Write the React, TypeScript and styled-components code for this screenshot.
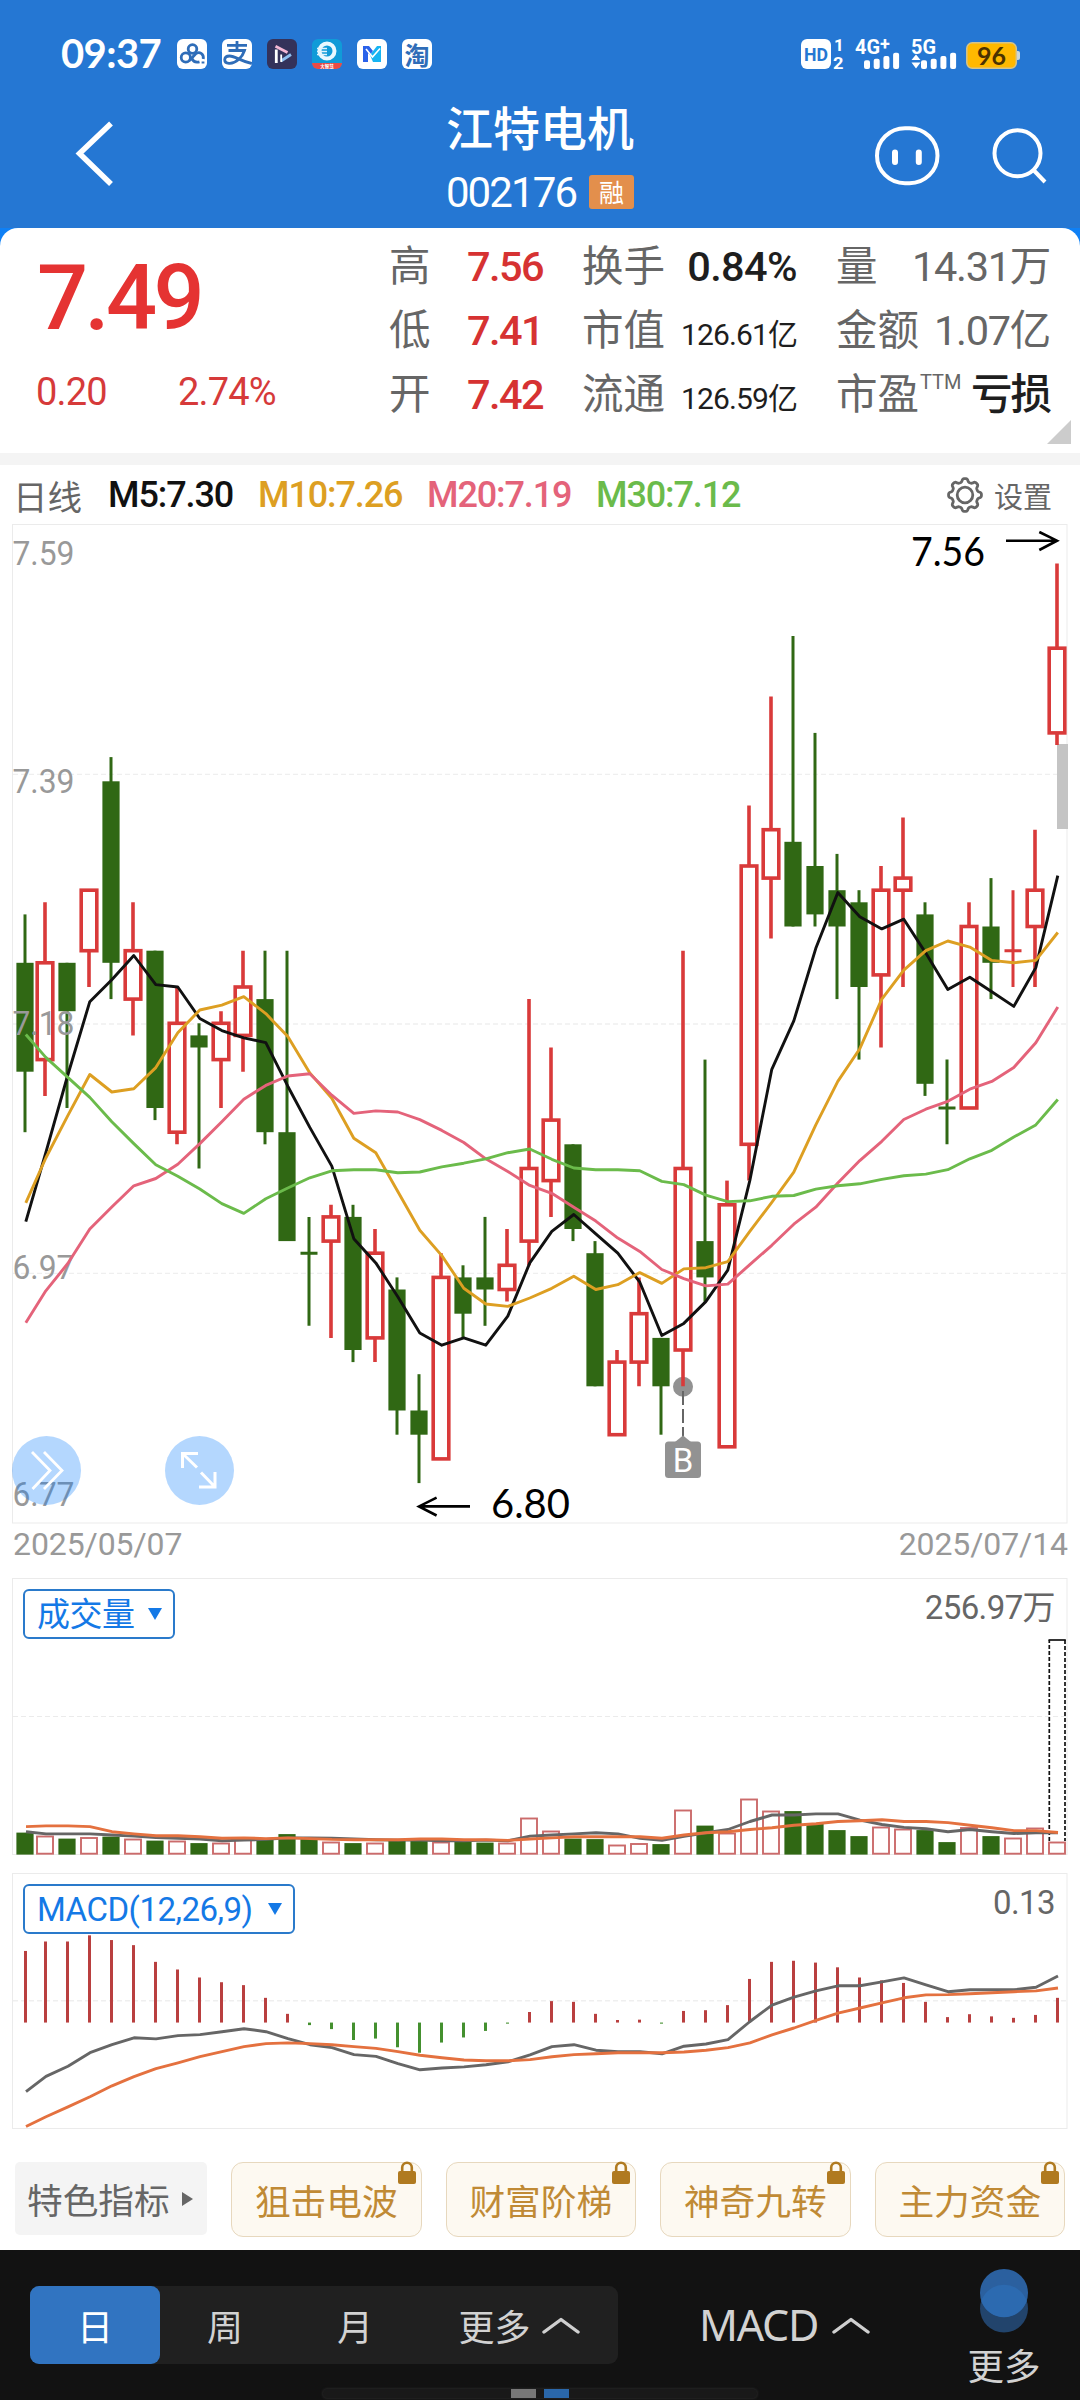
import React from "react";
import styled, { createGlobalStyle } from "styled-components";

const DIN = `Roboto, "Noto Sans CJK SC", sans-serif`;
const HUM = `Lato, "Noto Sans CJK SC", sans-serif`;

const C = {
  blue: "#2577d3",
  up: "#d93a3a",
  upSoft: "#cb6b6b",
  down: "#306814",
  grey: "#666",
  soft: "#999",
  frame: "#ebebeb",
  ma5: "#111",
  ma10: "#dd9f22",
  ma20: "#e4637a",
  ma30: "#6bbb4b",
  link: "#1479e6",
  gold: "#c08a35",
};

const GlobalStyle = createGlobalStyle`
  *, *::before, *::after { box-sizing: border-box; }
  html, body { margin: 0; padding: 0; background: #fff; }
  button { font: inherit; margin: 0; padding: 0; border: 0; background: none; color: inherit; }
`;

/* ---------- market data ---------- */

// open, close, high, low in cents
const candles: [number, number, number, number][] = [
  [723, 714, 727, 709], [715, 723, 728, 712], [723, 719, 723, 711], [724, 729, 729, 721],
  [738, 723, 740, 720], [720, 724, 728, 717], [724, 711, 724, 710], [709, 718, 721, 708],
  [717, 716, 718, 706], [715, 718, 719, 711], [717, 721, 724, 714], [720, 709, 724, 708],
  [709, 700, 724, 700], [699, 699, 702, 693], [700, 702, 703, 692], [702, 691, 703, 690],
  [692, 699, 701, 690], [696, 686, 697, 684], [686, 684, 689, 680], [682, 697, 699, 682],
  [697, 694, 698, 692], [697, 696, 702, 693], [696, 698, 701, 695], [700, 706, 720, 698],
  [705, 710, 716, 702], [708, 701, 708, 700], [699, 688, 700, 688], [684, 690, 691, 684],
  [690, 694, 697, 688], [692, 688, 692, 684], [691, 706, 724, 688], [700, 697, 715, 695],
  [683, 703, 705, 683], [708, 731, 736, 705], [730, 734, 745, 725], [733, 726, 750, 726],
  [731, 727, 742, 726], [729, 726, 732, 720], [728, 721, 729, 715], [722, 729, 731, 716],
  [729, 730, 735, 721], [727, 713, 728, 712], [711, 711, 715, 708], [711, 726, 728, 711],
  [726, 723, 730, 720], [724, 724, 729, 721], [726, 729, 734, 721], [742, 749, 756, 741],
];
const fallingDoji = new Set([13, 42]);
const isUp = (i: number) =>
  candles[i][1] === candles[i][0] ? !fallingDoji.has(i) : candles[i][1] > candles[i][0];

const xAt = (i: number) => (i === 0 ? 25 : 67 + 22 * (i - 2));
const yAt = (cents: number) => 563.5 + (756 - cents) * 12.1;

// Positions for the days whose averages reach back before the first candle
const lead5 = [1221.7, 1152.7, 1075, 1001.7];
const lead10 = [1202.8, 1158, 1115.6, 1074.5, 1092, 1088.7, 1067.6, 1032.7, 1010];
const lead20 = [
  1322.8, 1290.8, 1263.5, 1229, 1207, 1185.8, 1178.5, 1164.3, 1143.6, 1121.8, 1099.2, 1085.4,
  1076, 1073.8, 1095.2, 1113.4, 1110.9, 1112, 1119.6,
];
const lead30 = [
  1034.5, 1057.4, 1077.4, 1097.4, 1121.8, 1143.6, 1164.7, 1176.3, 1189, 1203.6, 1213.4, 1198.8,
  1188, 1177.8, 1170.8, 1169.8, 1169.8, 1172.7, 1172, 1166.9, 1163.2, 1158.9, 1152.7, 1149,
  1159.3, 1168, 1169.7, 1169.7, 1170.7,
];

const average = (days: number, lead: number[]) =>
  candles
    .map((_, i) => {
      if (i < lead.length) return `${xAt(i) + 0.8},${lead[i]}`;
      let sum = 0;
      for (let k = i - days + 1; k <= i; k++) sum += candles[k][1];
      return `${xAt(i) + 0.8},${yAt(sum / days).toFixed(1)}`;
    })
    .join(" ");

const volumes = [
  22, 19, 16, 17.5, 18, 16, 14, 14, 11.5, 12, 17.5, 15, 20.5, 15.5, 13, 11.5, 12, 14, 14, 13, 14,
  12, 12, 37, 24, 16, 15.5, 10, 11.5, 10.5, 45, 29, 22, 56, 44, 43.5, 31, 24.5, 18.5, 28, 26,
  24.5, 12.5, 27.5, 18.5, 17, 27, 13,
];
const vol5 = [
  720, 726, 726, 726, 729, 732, 736, 738, 740, 745, 743, 741, 737, 737, 738, 740, 742, 743, 743,
  745, 745, 743, 745, 732, 729, 726, 723, 726, 738, 744, 733, 723, 714, 692, 674, 674, 671, 671,
  688, 700, 708, 712, 720, 714, 720, 725, 723, 723,
];
const vol10 = [
  706, 704, 704, 706, 720, 726, 731, 731, 734, 738, 737, 739, 737, 739, 741, 742, 742, 742, 740,
  740, 742, 742, 744, 740, 737, 734, 734, 734, 734, 738, 729, 723, 720, 714, 709, 702, 698, 692,
  690, 687, 692, 692, 695, 702, 709, 717, 717, 722,
];
const macd = [
  1048, 1022, 1022, 1005, 1018, 1032, 1078, 1099, 1121, 1134, 1142, 1177, 1221, 1252, 1263, 1293,
  1289, 1313, 1328, 1300, 1286, 1268, 1248, 1216, 1186, 1188, 1221, 1238, 1237, 1248, 1213, 1211,
  1197, 1125, 1078, 1075, 1080, 1093, 1121, 1129, 1136, 1188, 1230, 1222, 1228, 1232, 1224, 1177,
];
const dif = [
  1435, 1393, 1365, 1328, 1306, 1287, 1290, 1281, 1278, 1270, 1262, 1270, 1289, 1306, 1314, 1333,
  1338, 1358, 1375, 1370, 1367, 1361, 1353, 1334, 1311, 1306, 1321, 1325, 1325, 1331, 1310, 1304,
  1292, 1242, 1197, 1175, 1158, 1144, 1144, 1133, 1122, 1141, 1160, 1155, 1155, 1155, 1148, 1117,
];
const dea = [
  1531, 1504, 1477, 1449, 1419, 1394, 1372, 1356, 1339, 1325, 1311, 1303, 1301, 1303, 1306, 1311,
  1316, 1325, 1335, 1342, 1348, 1350, 1350, 1347, 1339, 1333, 1331, 1328, 1328, 1328, 1326, 1321,
  1314, 1301, 1279, 1260, 1239, 1219, 1205, 1191, 1177, 1169, 1168, 1166, 1163, 1160, 1158, 1150,
];
const scaled = (v: number) => v / 2.751;
const line = (values: number[]) =>
  values.map((v, i) => `${xAt(i) + 1},${scaled(v).toFixed(1)}`).join(" ");

/* ---------- page and header ---------- */

const Page = styled.main`
  width: 1080px;
  height: 2400px;
  overflow: hidden;
  display: flex;
  flex-direction: column;
  background: #fff;
  font-family: ${DIN};
`;

const Header = styled.header`
  height: 228px;
  flex: none;
  background: ${C.blue};
  color: #fff;
`;

const StatusBar = styled.div`
  height: 108px;
  padding: 39px 60px 39px 60px;
  display: flex;
  align-items: center;
`;

const Clock = styled.span`
  width: 117px;
  padding: 0 0 2px 1px;
  font: 700 40px/28px ${HUM};
  letter-spacing: -0.6px;
`;

const AppIcons = styled.div`
  display: flex;
  gap: 15px;
  margin-right: auto;
`;

const AppIcon = styled.span<{ $bg?: string }>`
  width: 30px;
  height: 30px;
  border-radius: 6px;
  display: flex;
  align-items: center;
  justify-content: center;
  background: ${(p) => p.$bg || "#fff"};
  color: #2f6db8;
  font: 700 25px/30px "Noto Sans CJK SC", sans-serif;
  svg { display: block; border-radius: 6px; }
`;

const SignalIcons = styled.svg`
  display: block;
  width: 219px;
  height: 30px;
  overflow: visible;
`;

const NavBar = styled.div`
  height: 120px;
  display: grid;
  grid-template-columns: 360px 1fr 360px;
`;

const NavSide = styled.div<{ $end?: boolean }>`
  display: flex;
  justify-content: ${(p) => (p.$end ? "flex-end" : "flex-start")};
  svg { display: block; }
`;

const TitleBlock = styled.div`
  display: flex;
  flex-direction: column;
  align-items: center;
`;

const StockName = styled.h1`
  margin: 0;
  height: 48px;
  font: 500 47px/36px "Noto Sans CJK SC", sans-serif;
  white-space: nowrap;
`;

const CodeRow = styled.div`
  display: flex;
  align-items: center;
  gap: 13px;
  height: 72px;
  padding-left: 0;
`;

const Code = styled.span`
  padding-top: 2px;
  font: 400 42px/42px ${DIN};
  letter-spacing: -1.9px;
`;

const MarginTag = styled.span`
  width: 45px;
  height: 34px;
  border-radius: 3px;
  background: #e38f4c;
  font: 400 25px/33px "Noto Sans CJK SC", sans-serif;
  text-align: center;
`;

/* ---------- quote ---------- */

const QuoteBack = styled.div`
  flex: none;
  height: 225px;
  background: linear-gradient(#0f80f5 30px, #fff 30px);
`;

const Quote = styled.section`
  position: relative;
  height: 225px;
  border-radius: 18px 18px 0 0;
  background: #fff;
  display: flex;
`;

const PriceBlock = styled.div`
  width: 389px;
  padding: 23px 0 0 37px;
  color: #e53332;
`;

const Price = styled.div`
  font: 500 90px/96px ${DIN};
  letter-spacing: -3.6px;
`;

const ChangeRow = styled.div`
  display: flex;
  gap: 71px;
  padding-top: 26px;
  margin-left: -1px;
  font: 400 38px/38px ${DIN};
  letter-spacing: -0.8px;
  color: #d63a3a;
`;

const Stats = styled.div`
  padding-top: 3px;
  display: grid;
  grid-template-columns: 154px 215px 214px;
  column-gap: 39px;
  grid-auto-rows: 64px;
`;

const Stat = styled.div`
  display: flex;
  justify-content: space-between;
  align-items: baseline;
  height: 64px;
  font: 400 41.5px/64px "Noto Sans CJK SC", sans-serif;
  color: ${C.grey};
  white-space: nowrap;
`;

const StatValue = styled.span<{ $tone?: string; $small?: boolean; $tight?: number; $bold?: boolean }>`
  font-family: ${DIN};
  font-size: ${(p) => (p.$small ? 30 : 41.5)}px;
  font-weight: ${(p) => (p.$bold ? 500 : 400)};
  color: ${(p) => p.$tone || C.grey};
  letter-spacing: ${(p) => p.$tight ?? -1.6}px;
`;

const Ttm = styled.sup`
  font: 400 20px/20px ${DIN};
  vertical-align: 20px;
  margin-left: 1px;
`;

const Corner = styled.i`
  position: absolute;
  right: 9px;
  bottom: 9px;
  border-left: 24px solid transparent;
  border-bottom: 24px solid #ccc;
`;

const Divider = styled.div`
  flex: none;
  height: 12px;
  background: #f4f4f4;
`;

/* ---------- chart ---------- */

const Legend = styled.div`
  flex: none;
  height: 59px;
  padding: 1px 28px 0 13px;
  display: flex;
  align-items: center;
  color: ${C.grey};
`;

const Period = styled.span`
  width: 95px;
  font: 400 34.5px/59px "Noto Sans CJK SC", sans-serif;
`;

const Average = styled.span<{ $color: string; $width: number }>`
  width: ${(p) => p.$width}px;
  color: ${(p) => p.$color};
  font: 500 36px/59px ${DIN};
  letter-spacing: -1.1px;
`;

const Settings = styled.button`
  margin-left: auto;
  display: flex;
  align-items: center;
  gap: 11px;
  font: 400 29px/57px "Noto Sans CJK SC", sans-serif;
  svg { display: block; }
`;

const ChartArea = styled.section`
  flex: none;
  position: relative;
  height: 1000px;
  svg { display: block; }
`;

const Fab = styled.button<{ $left: number }>`
  position: absolute;
  left: ${(p) => p.$left}px;
  top: 912px;
  width: 69px;
  height: 69px;
  border-radius: 50%;
  background: rgba(8, 122, 252, 0.3);
`;

const Dates = styled.div`
  flex: none;
  height: 54px;
  padding: 1px 12px 0 13px;
  display: flex;
  justify-content: space-between;
  font: 400 32px/38px ${DIN};
  color: ${C.soft};
  letter-spacing: -0.1px;
`;

const SubChart = styled.section<{ $height: number }>`
  flex: none;
  position: relative;
  height: ${(p) => p.$height}px;
`;

const Plot = styled.svg`
  position: absolute;
  left: 0;
  top: 0;
  display: block;
`;

const SubHeader = styled.div`
  position: relative;
  padding: 11px 25px 0 23px;
  display: flex;
  justify-content: space-between;
  align-items: flex-start;
`;

const IndicatorTag = styled.button<{ $width: number }>`
  width: ${(p) => p.$width}px;
  height: 50px;
  border: 2px solid #2a7acb;
  border-radius: 6px;
  background: #fff;
  color: ${C.link};
  padding: 2px 11px 0 12px;
  display: flex;
  align-items: center;
  justify-content: space-between;
  font: 400 33px/44px ${DIN};
  letter-spacing: -0.5px;
`;

const Down = styled.i`
  border: 7.5px solid transparent;
  border-top: 12px solid ${C.link};
  border-bottom: 0;
  margin-bottom: 3px;
`;

const Reading = styled.span`
  font: 400 33px/38px ${DIN};
  color: ${C.grey};
  letter-spacing: -0.6px;
`;

/* ---------- indicator chips ---------- */

const Chips = styled.div`
  flex: none;
  height: 121px;
  padding: 33px 15px 0;
  display: flex;
  align-items: flex-start;
  gap: 24px;
`;

const Special = styled.button`
  width: 192px;
  height: 73px;
  border-radius: 5px;
  background: #f4f4f4;
  color: ${C.grey};
  font: 400 35.7px/73px "Noto Sans CJK SC", sans-serif;
  display: flex;
  align-items: center;
  justify-content: space-between;
  padding: 0 14px 0 12px;
`;

const Right = styled.i`
  border: 7.5px solid transparent;
  border-left: 11px solid ${C.grey};
  border-right: 0;
`;

const Chip = styled.button`
  position: relative;
  flex: 1;
  height: 75px;
  border: 1.5px solid #e7d8be;
  border-radius: 12px;
  background: #fdf9f1;
  color: ${C.gold};
  font: 400 35.7px/70px "Noto Sans CJK SC", sans-serif;
  white-space: nowrap;
  svg { position: absolute; right: 5px; top: -2px; display: block; }
`;

/* ---------- footer ---------- */

const Footer = styled.footer`
  flex: none;
  position: relative;
  height: 150px;
  background: #121212;
  color: #d2d2d2;
  display: flex;
  font: 400 36px/78px "Noto Sans CJK SC", sans-serif;
`;

const Segments = styled.div`
  margin: 36px 0 0 30px;
  width: 588px;
  height: 78px;
  border-radius: 9px;
  background: #202020;
  display: flex;
`;

const Segment = styled.button<{ $active?: boolean; $wide?: boolean }>`
  width: ${(p) => (p.$wide ? 198 : 130)}px;
  border-radius: 9px;
  display: flex;
  align-items: center;
  justify-content: center;
  gap: 11px;
  background: ${(p) => (p.$active ? "#3174c1" : "transparent")};
  color: ${(p) => (p.$active ? "#fff" : "inherit")};
`;

const Indicator = styled.button`
  margin: 36px 0 0 81px;
  width: 172px;
  height: 78px;
  display: flex;
  align-items: center;
  gap: 14px;
  font-family: "Noto Sans", sans-serif;
  font-size: 43px;
  line-height: 80px;
  letter-spacing: -1.3px;
`;

const More = styled.button`
  width: 90px;
  margin: 19px 0 0 88px;
  display: flex;
  flex-direction: column;
  align-items: center;
  line-height: 64px;
  font-size: 36.5px;
  svg { display: block; }
`;

const Scroll = styled.div`
  position: absolute;
  left: 323px;
  top: 139px;
  width: 434px;
  height: 9px;
  border-radius: 5px;
  background: #191919;
  box-shadow: 0 0 2px 1px #242424;
  display: flex;
  gap: 8px;
  padding-left: 188px;
`;

const Mark = styled.i<{ $color: string }>`
  width: 25px;
  height: 9px;
  background: ${(p) => p.$color};
`;

/* ---------- drawings ---------- */

const Signals = () => (
  <SignalIcons viewBox="801 39 219 30" fill="#fff">
    <rect x="801" y="39" width="30" height="30" rx="6" />
    <g fontFamily="Roboto, sans-serif" fontWeight="700">
      <text x="804" y="61" fontSize="19" fill={C.blue} textLength="24" lengthAdjust="spacingAndGlyphs">HD</text>
      <text x="834" y="51" fontSize="17">1</text>
      <text x="833" y="68.500" fontSize="17" textLength="10.500" lengthAdjust="spacingAndGlyphs">2</text>
      <text x="855" y="54" fontSize="21" textLength="25" lengthAdjust="spacingAndGlyphs">4G</text>
      <text x="880" y="50" fontSize="18">+</text>
      <text x="911" y="54" fontSize="21" textLength="25" lengthAdjust="spacingAndGlyphs">5G</text>
    </g>
    {[0, 1, 2, 3].map((n) => {
      const top = [60.3, 58.7, 56, 52.7][n];
      return (
        <g key={n}>
          <rect x={864 + n * 9.7} y={top} width="6" height={69 - top} rx="2" />
          <rect x={921 + n * 9.7} y={top} width="6" height={69 - top} rx="2" />
        </g>
      );
    })}
    <path d="M911.500 60 L916 54.500 L920.500 60Z M911.500 62.500 L920.500 62.500 L916 68.500Z" />
    <path d="M1016 51 h2 q2 0 2 2 v5 q0 2 -2 2 h-2Z" fill="#c9d6dd" />
    <rect x="966.800" y="42.800" width="49.500" height="25.500" rx="5.500" fill="#ffb800" stroke="#d5c48a" strokeWidth="1.500" />
    <text x="977" y="64.500" fontSize="25" fontWeight="700" fontFamily="Lato, sans-serif" fill="#4b3200" textLength="29" lengthAdjust="spacingAndGlyphs">96</text>
  </SignalIcons>
);

const Lock = () => (
  <svg width="18" height="24" viewBox="0 0 18 24">
    <path d="M4.200 10 V6.500 a4.800 4.800 0 0 1 9.600 0 V10" fill="none" stroke="#b07a20" strokeWidth="2.600" />
    <rect x="0" y="10" width="18" height="13" rx="2" fill="#b07a20" />
  </svg>
);

const Caret = () => (
  <svg width="38" height="17" viewBox="0 0 38 17" fill="none" stroke="#cfcfcf" strokeWidth="3.400" strokeLinecap="round" strokeLinejoin="round">
    <path d="M2 15 L19 2.500 L36 15" />
  </svg>
);

const gearPath = (() => {
  const pts: string[] = [];
  for (let a = 0; a <= 120; a++) {
    const t = (a / 120) * Math.PI * 2;
    const r = 14.8 + 1.7 * Math.tanh(2 * Math.cos(8 * t));
    pts.push(`${(18 + r * Math.sin(t)).toFixed(2)} ${(18 - r * Math.cos(t)).toFixed(2)}`);
  }
  return `M${pts.join(" L")}Z`;
})();

const Gear = () => (
  <svg width="36" height="36" viewBox="0 0 36 36" fill="none" stroke={C.grey} strokeWidth="2.800" strokeLinejoin="round">
    <path d={gearPath} />
    <circle cx="18" cy="18" r="7.800" />
  </svg>
);

const priceLabels: [string, number][] = [
  ["7.59", 565], ["7.39", 792.7], ["7.18", 1035], ["6.97", 1278.8], ["6.77", 1506],
];

const CandleChart = () => (
  <svg width="1080" height="1000" viewBox="0 524 1080 1000" fontFamily={DIN}>
    <rect x="12.500" y="524.500" width="1054.500" height="998.500" fill="#fff" stroke={C.frame} />
    {[774.3, 1024, 1273.4].map((y) => (
      <path key={y} d={`M13 ${y}H1066`} stroke="#efefef" strokeWidth="1.300" strokeDasharray="5 3" />
    ))}
    <rect x="1057" y="744" width="11" height="85" fill="#c4c4c4" />
    <circle cx="683" cy="1386.700" r="10" fill="#929292" />
    {candles.map(([open, close, high, low], i) => {
      const up = isUp(i);
      const x = xAt(i);
      const top = yAt(Math.max(open, close));
      const bottom = yAt(Math.min(open, close));
      if (open === close)
        return (
          <path
            key={i}
            d={`M${x} ${yAt(high)}V${yAt(low)}M${x - 8.5} ${top}H${x + 8.5}`}
            stroke={up ? C.up : C.down}
            strokeWidth="3"
          />
        );
      return up ? (
        <g key={i} stroke={C.up} strokeWidth="3.600">
          <path d={`M${x} ${yAt(high)}V${top}M${x} ${bottom}V${yAt(low)}`} />
          <rect x={x - 7.8} y={top} width="15.600" height={bottom - top} fill="#fff" />
        </g>
      ) : (
        <g key={i}>
          <path d={`M${x} ${yAt(high)}V${yAt(low)}`} stroke={C.down} strokeWidth="3" />
          <rect x={x - 8.6} y={top} width="17.200" height={bottom - top} fill={C.down} />
        </g>
      );
    })}
    <g fill={C.soft} fontSize="34">
      {priceLabels.map(([label, y]) => (
        <text key={label} x="12.500" y={y} textLength="62" lengthAdjust="spacingAndGlyphs">{label}</text>
      ))}
    </g>
    <g fill="none" strokeWidth="2.900" strokeLinejoin="round">
      <polyline points={average(5, lead5)} stroke={C.ma5} />
      <polyline points={average(10, lead10)} stroke={C.ma10} />
      <polyline points={average(20, lead20)} stroke={C.ma20} />
      <polyline points={average(30, lead30)} stroke={C.ma30} />
    </g>
    <path d="M683 1391V1437" stroke="#666" strokeWidth="2" strokeDasharray="14 4" />
    <path d="M675 1442 L683 1435.500 L691 1442Z" fill="#929292" />
    <rect x="665" y="1441.500" width="36" height="36.500" rx="3.500" fill="#929292" />
    <text x="683" y="1472" textAnchor="middle" fontSize="33" fill="#fff">B</text>
    <g fill="none" stroke="#000" strokeWidth="2.600">
      <path d="M1006 540.700H1056M1039.300 532L1057 540.700L1039.300 550" />
      <path d="M470 1506.400H420M436.600 1497.600L419 1506.400L436.600 1515.500" />
    </g>
    <g fill="#000" fontSize="40" fontFamily="Lato, sans-serif">
      <text x="911" y="565.500" textLength="74" lengthAdjust="spacingAndGlyphs">7.56</text>
      <text x="491" y="1517.500" textLength="79" lengthAdjust="spacingAndGlyphs">6.80</text>
    </g>
  </svg>
);

const VolumePlot = () => (
  <Plot width="1080" height="278" viewBox="0 8 1080 278">
    <rect x="12.500" y="8.500" width="1054.500" height="276" fill="#fff" stroke={C.frame} />
    <path d="M13 146.500H1066" stroke="#ebebeb" strokeWidth="1" strokeDasharray="5 3" />
    {volumes.map((h, i) =>
      isUp(i) ? (
        <rect key={i} x={xAt(i) - 8} y={284.6 - h + 0.9} width="16" height={h - 1.8} fill="#fff" stroke={C.upSoft} strokeWidth="1.900" />
      ) : (
        <rect key={i} x={xAt(i) - 8.6} y={284.6 - h} width="17.200" height={h} fill={C.down} />
      )
    )}
    <path d="M1049.300 271V70M1065 70V271" stroke="#111" strokeWidth="1.700" strokeDasharray="4 2" />
    <path d="M1048.500 70H1065.800" stroke="#111" strokeWidth="1.700" />
    <g fill="none" strokeWidth="2.900" strokeLinejoin="round">
      <polyline points={line(vol5)} stroke="#666" />
      <polyline points={line(vol10)} stroke="#e4713f" />
    </g>
  </Plot>
);

const MacdPlot = () => (
  <Plot width="1080" height="256" viewBox="0 303 1080 256">
    <rect x="12.500" y="303.500" width="1054.500" height="255" fill="#fff" stroke={C.frame} />
    <path d="M13 430.800H1066" stroke="#efefef" strokeWidth="1.500" strokeDasharray="5 3" />
    {macd.map((v, i) => (
      <path key={i} d={`M${xAt(i) + 0.5} ${scaled(v)}V${scaled(1245)}`} stroke={v < 1244 ? "#b93f3f" : "#44902f"} strokeWidth="3" />
    ))}
    <g fill="none" strokeWidth="2.900" strokeLinejoin="round">
      <polyline points={line(dif)} stroke="#666" />
      <polyline points={line(dea)} stroke="#e4713f" />
    </g>
  </Plot>
);

/* ---------- app ---------- */

export default function App() {
  return (
    <Page>
      <GlobalStyle />
      <Header>
        <StatusBar>
          <Clock>09:37</Clock>
          <AppIcons>
            <AppIcon>
              <svg width="30" height="30" viewBox="0 0 30 30" fill="none" stroke="#2f6db8" strokeWidth="2.800">
                <circle cx="15.500" cy="10" r="4.300" />
                <circle cx="8.800" cy="18.500" r="4.600" />
                <path d="M12.500 21.500 L18.500 15 C22.500 11.800 27 15 26.300 20 M15 19.500 C16.500 23.500 20 23.500 22.500 22.800" />
                <path d="M26 22.500v2" />
              </svg>
            </AppIcon>
            <AppIcon>
              <svg width="30" height="30" viewBox="0 0 30 30" fill="none" stroke="#2f6db8" strokeWidth="2.800">
                <path d="M5 6.300H25M15 2V11.500M6.500 11.500H22.500C20.500 18 14 24.800 7 24.300C1 23.800 1.500 17 7.500 17C13.500 17 19 22.500 30 24.500" />
              </svg>
            </AppIcon>
            <AppIcon $bg="#34325a">
              <svg width="30" height="30" viewBox="0 0 30 30" fill="none" strokeWidth="2.800">
                <path d="M9.300 10.500V24" stroke="#fff" />
                <path d="M8.500 7.300L20.500 13.500" stroke="#f5b9d6" />
                <path d="M14 22L24 15.500" stroke="#8fc0f0" />
                <path d="M14.200 15.500V23" stroke="#fff" strokeWidth="1.800" />
              </svg>
            </AppIcon>
            <AppIcon $bg="#109bd8">
              <svg width="30" height="30" viewBox="0 0 30 30">
                <rect y="24" width="30" height="6" fill="#ea4b45" />
                <circle cx="15" cy="12" r="7.500" fill="none" stroke="#e9f8ff" strokeWidth="4" />
                <path d="M5 9.500H15M5 12.500H15M5 15.500H15" stroke="#dff3fd" strokeWidth="1.300" />
                <text x="15" y="28.800" fontSize="4.500" textAnchor="middle" fill="#fff">大智慧</text>
              </svg>
            </AppIcon>
            <AppIcon>
              <svg width="30" height="30" viewBox="0 0 30 30">
                <path d="M6 7h6l4 5-3 4-2-2v9H6Z" fill="#2a62ea" />
                <path d="M24 7h-4l-7 9 3 7h8Z" fill="#16b4f2" />
                <path d="M9 10l6.500 8L23 9.500" fill="none" stroke="#fff" strokeWidth="1.600" />
              </svg>
            </AppIcon>
            <AppIcon>淘</AppIcon>
          </AppIcons>
          <Signals />
        </StatusBar>
        <NavBar>
          <NavSide>
            <svg width="180" height="120" viewBox="0 108 180 120" fill="none" stroke="#fff" strokeWidth="5.500">
              <path d="M111 123.500L79.500 153.500L111 184" />
            </svg>
          </NavSide>
          <TitleBlock>
            <StockName>江特电机</StockName>
            <CodeRow>
              <Code>002176</Code>
              <MarginTag>融</MarginTag>
            </CodeRow>
          </TitleBlock>
          <NavSide $end>
            <svg width="230" height="120" viewBox="850 108 230 120" fill="none" stroke="#fff" strokeWidth="4">
              <rect x="877" y="128.200" width="60.500" height="55" rx="28" />
              <path d="M895 152.500v9.500M918.800 152.500v9.500" strokeWidth="6" strokeLinecap="round" />
              <circle cx="1017.500" cy="153.300" r="23" />
              <path d="M1033.500 170L1045 182" />
            </svg>
          </NavSide>
        </NavBar>
      </Header>

      <QuoteBack>
        <Quote>
          <PriceBlock>
            <Price>7.49</Price>
            <ChangeRow>
              <span>0.20</span>
              <span>2.74%</span>
            </ChangeRow>
          </PriceBlock>
          <Stats>
            <Stat>高<StatValue $tone="#d63232" $bold>7.56</StatValue></Stat>
            <Stat>换手<StatValue $tone="#1e1e1e" $bold $tight={-0.6}>0.84%</StatValue></Stat>
            <Stat>量<StatValue $tight={-1.3}>14.31万</StatValue></Stat>
            <Stat>低<StatValue $tone="#d63232" $bold>7.41</StatValue></Stat>
            <Stat>市值<StatValue $tone="#1e1e1e" $small $tight={-0.9}>126.61亿</StatValue></Stat>
            <Stat>金额<StatValue $tight={-1.3}>1.07亿</StatValue></Stat>
            <Stat>开<StatValue $tone="#d63232" $bold>7.42</StatValue></Stat>
            <Stat>流通<StatValue $tone="#1e1e1e" $small $tight={-0.9}>126.59亿</StatValue></Stat>
            <Stat>
              <span>市盈<Ttm>TTM</Ttm></span>
              <StatValue $tone="#1e1e1e" $tight={-2} $bold>亏损</StatValue>
            </Stat>
          </Stats>
          <Corner />
        </Quote>
      </QuoteBack>
      <Divider />

      <Legend>
        <Period>日线</Period>
        <Average $color={C.ma5} $width={150}>M5:7.30</Average>
        <Average $color={C.ma10} $width={169}>M10:7.26</Average>
        <Average $color={C.ma20} $width={169}>M20:7.19</Average>
        <Average $color={C.ma30} $width={150}>M30:7.12</Average>
        <Settings><Gear />设置</Settings>
      </Legend>

      <ChartArea>
        <CandleChart />
        <Fab $left={12}>
          <svg width="69" height="69" viewBox="0 0 69 69" fill="none" stroke="#fff" strokeWidth="2.800">
            <path d="M20 16L38 34.500L20.500 53M32 16L50 34.500L32 53" />
          </svg>
        </Fab>
        <Fab $left={165}>
          <svg width="69" height="69" viewBox="0 0 69 69" fill="none" stroke="#fff" strokeWidth="3">
            <path d="M33 17.500H17.500V32M17.500 17.500L32 31.500M34 51H50V36M50 51L36 36.500" />
          </svg>
        </Fab>
      </ChartArea>
      <Dates>
        <span>2025/05/07</span>
        <span>2025/07/14</span>
      </Dates>

      <SubChart $height={295}>
        <VolumePlot />
        <SubHeader>
          <IndicatorTag $width={152}>成交量<Down /></IndicatorTag>
          <Reading>256.97万</Reading>
        </SubHeader>
      </SubChart>
      <SubChart $height={256}>
        <MacdPlot />
        <SubHeader>
          <IndicatorTag $width={272}>MACD(12,26,9)<Down /></IndicatorTag>
          <Reading>0.13</Reading>
        </SubHeader>
      </SubChart>

      <Chips>
        <Special>特色指标<Right /></Special>
        {["狙击电波", "财富阶梯", "神奇九转", "主力资金"].map((name) => (
          <Chip key={name}>{name}<Lock /></Chip>
        ))}
      </Chips>

      <Footer>
        <Segments>
          <Segment $active>日</Segment>
          <Segment>周</Segment>
          <Segment>月</Segment>
          <Segment $wide>更多<Caret /></Segment>
        </Segments>
        <Indicator>MACD<Caret /></Indicator>
        <More>
          <svg width="48" height="64" viewBox="0 0 48 64">
            <circle cx="24" cy="39.500" r="24" fill="#22446c" />
            <circle cx="24" cy="24" r="24" fill="#2b609f" />
            <path d="M1.300 32 A24 24 0 0 1 46.700 32 A24 24 0 0 1 1.300 32Z" fill="#2c6ab0" />
          </svg>
          更多
        </More>
        <Scroll>
          <Mark $color="#777" />
          <Mark $color="#2a67aa" />
        </Scroll>
      </Footer>
    </Page>
  );
}
